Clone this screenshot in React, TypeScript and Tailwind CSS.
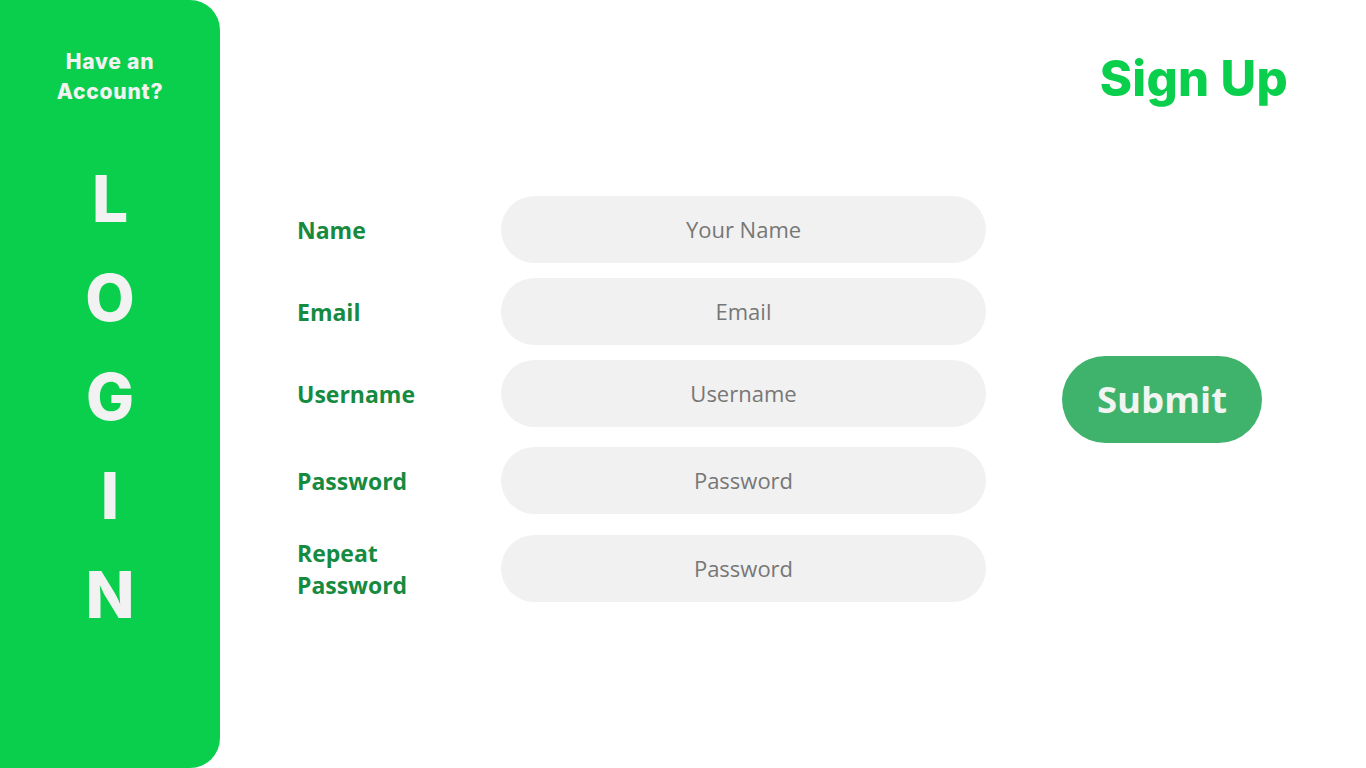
import React from "react";

const heading = { fontFamily: "Inter, 'Noto Sans', sans-serif" };
const body = { fontFamily: "'Open Sans', 'Noto Sans', sans-serif" };

const rows: { label: string[]; ph: string; mt: string }[] = [
  { label: ["Name"], ph: "Your Name", mt: "mt-0" },
  { label: ["Email"], ph: "Email", mt: "mt-[15px]" },
  { label: ["Username"], ph: "Username", mt: "mt-[15px]" },
  { label: ["Password"], ph: "Password", mt: "mt-[20px]" },
  { label: ["Repeat", "Password"], ph: "Password", mt: "mt-[21px]" },
];

export default function App() {
  return (
    <div className="flex w-[1366px] h-[768px] bg-white overflow-hidden">
      <aside
        className="w-[220px] h-full bg-[#0acf4d] rounded-r-[30px] flex flex-col items-center text-[#f2f2f2]"
        style={heading}
      >
        <div className="mt-[47px] text-[21px] leading-[30px] font-extrabold text-center tracking-[0.8px]">
          Have an
          <br />
          Account?
        </div>
        <div className="mt-[42px] flex flex-col items-center">
          {["L", "O", "G", "I", "N"].map((c) => (
            <div key={c} className="h-[99px] text-[64px] leading-[99px] font-extrabold">
              {c}
            </div>
          ))}
        </div>
      </aside>
      <main className="flex-1 flex flex-col">
        <div className="flex justify-end pr-[78px] pt-[47px]">
          <h1 className="text-[49px] leading-[64px] font-extrabold text-[#0acf4d] tracking-[0.3px]" style={heading}>
            Sign Up
          </h1>
        </div>
        <div className="flex items-center pl-[77px] mt-[85px]" style={body}>
          <div className="flex flex-col w-[689px]">
            {rows.map((r, i) => (
              <div key={i} className={`flex items-center ${r.mt}`}>
                <div className="w-[204px] text-[23px] leading-[32px] font-bold text-[#168a3f]">
                  {r.label.map((l) => (
                    <div key={l}>{l}</div>
                  ))}
                </div>
                <div className="w-[485px] h-[67px] rounded-full bg-[#f1f1f1] flex items-center justify-center text-[22px] text-[#777777]">
                  {r.ph}
                </div>
              </div>
            ))}
          </div>
          <button className="ml-[76px] w-[200px] h-[87px] rounded-full bg-[#3fb36c] text-[#f1f5f1] text-[36.5px] font-bold flex items-center justify-center">
            Submit
          </button>
        </div>
      </main>
    </div>
  );
}
